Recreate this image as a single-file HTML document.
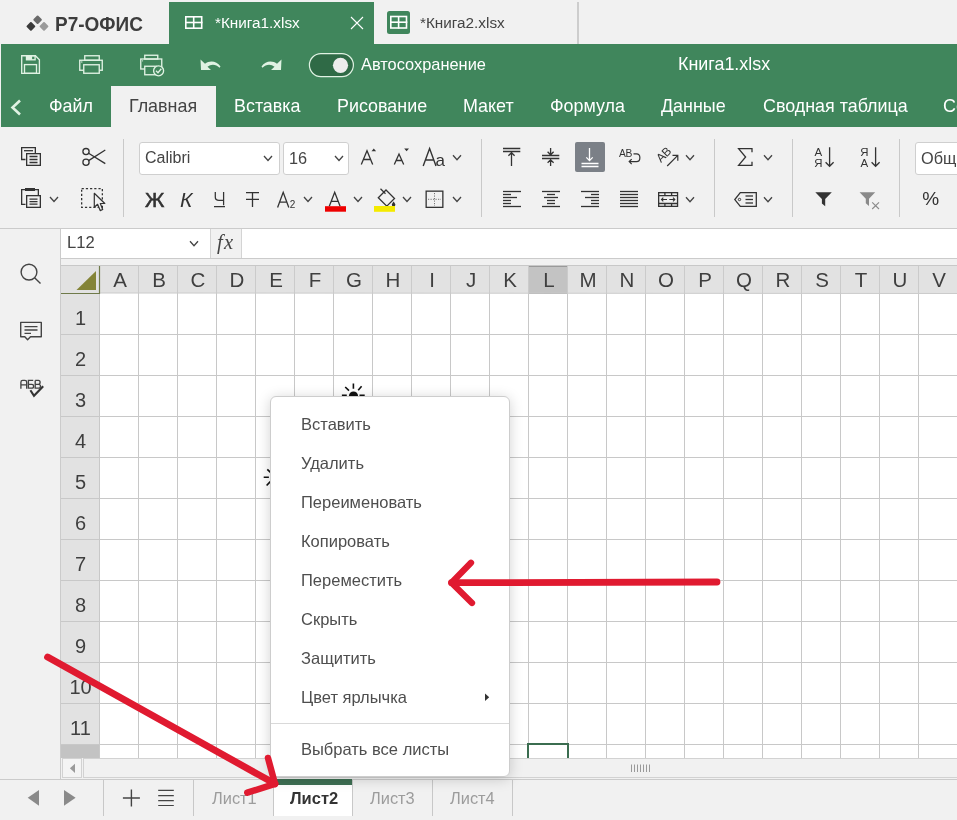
<!DOCTYPE html>
<html><head><meta charset="utf-8">
<style>
*{box-sizing:border-box}
html,body{margin:0;padding:0}
body{width:957px;height:820px;overflow:hidden;position:relative;background:#f1f1f1;font-family:"Liberation Sans",sans-serif;color:#444}
.a{position:absolute}
.t{position:absolute;white-space:nowrap;line-height:1;will-change:transform}
svg{position:absolute;overflow:visible;left:0;top:0;will-change:transform}
</style></head><body>
<div class="a" style="left:0;top:0;width:957px;height:44px;background:#f1f1f1"></div>
<svg width="957" height="44">
<rect x="27.5" y="23" width="6.8" height="6.8" rx="1" fill="#3a3a3a" transform="rotate(45 30.9 26.4)"/>
<rect x="34.2" y="16.5" width="6.6" height="6.6" rx="1" fill="#6a6a6a" transform="rotate(45 37.6 19.9)"/>
<rect x="40.6" y="23" width="6.8" height="6.8" rx="1" fill="#9a9a9a" transform="rotate(45 44 26.4)"/>
</svg>
<div class="t" style="left:55.00px;top:14.72px;font-size:19px;color:#3d3d3d;font-weight:bold;transform:scaleY(1.08);transform-origin:0 100%;">Р7-ОФИС</div>
<div class="a" style="left:169px;top:2px;width:205px;height:42px;background:#40865c"></div>
<svg width="957" height="44">
<g stroke="#fff" stroke-width="1.6" fill="none">
<rect x="185.8" y="16.8" width="15.9" height="11.4"/>
<line x1="193.7" y1="16" x2="193.7" y2="29"/><line x1="185" y1="22.5" x2="202.5" y2="22.5"/>
<path d="M351 17L363 29M363 17L351 29" stroke-width="1.1"/>
</g>
<rect x="387" y="11" width="23" height="23" rx="2.5" fill="#40865c"/>
<g stroke="#fff" stroke-width="1.6" fill="none">
<rect x="390.8" y="16.5" width="15.7" height="11.5"/>
<line x1="398.6" y1="16" x2="398.6" y2="28.5"/><line x1="390" y1="22.2" x2="407.3" y2="22.2"/>
</g>
</svg>
<div class="t" style="left:215.00px;top:15.35px;font-size:15.3px;color:#fff;font-weight:normal;">*Книга1.xlsx</div>
<div class="t" style="left:420.00px;top:15.35px;font-size:15.3px;color:#444;font-weight:normal;">*Книга2.xlsx</div>
<div class="a" style="left:577px;top:2px;width:2px;height:42px;background:#cdcdcd"></div>
<div class="a" style="left:1px;top:44px;width:956px;height:83px;background:#40865c"></div>
<svg width="957" height="130">
<g fill="none" stroke="#e0f2e3" stroke-width="1.35">
<path d="M21.7 55.7H35.4L39.4 59.7V73.3H21.7Z"/>
<rect x="24.5" y="64.6" width="12" height="8.7"/>
<rect x="26.5" y="55.7" width="8.6" height="4.1"/>
<!-- printer -->
<rect x="84.75" y="55.75" width="14.5" height="4.5"/>
<rect x="79.75" y="60.25" width="22.5" height="10"/>
<rect x="83.75" y="64.75" width="15.5" height="8.5" fill="#40865c"/>
<!-- quick print -->
<rect x="144.75" y="55.25" width="13" height="3.8"/>
<rect x="140.75" y="59" width="21" height="10"/>
<rect x="144.75" y="66.25" width="12" height="8.5" fill="#40865c"/>
<circle cx="158.6" cy="70.8" r="5" fill="#40865c"/>
<path d="M156 70.8L158 72.8L161.3 68.8"/>
</g>
<rect x="26.5" y="55.5" width="5.6" height="4.3" fill="#e0f2e3"/>
<circle cx="81.8" cy="62" r="0.7" fill="#e0f2e3"/>
<circle cx="142.6" cy="60.8" r="0.6" fill="#e0f2e3"/>
<!-- undo -->
<path d="M200.5 59.5L201 70H211L207.5 66.8C211 63.8 216 64 219.5 67.8L220.5 66.5C216.5 60.5 209.5 60 205 63.8Z" fill="#e0f2e3"/>
<!-- redo -->
<path d="M281.5 59.5L281 70H271L274.5 66.8C271 63.8 266 64 262.5 67.8L261.5 66.5C265.5 60.5 272.5 60 277 63.8Z" fill="#e0f2e3"/>
<!-- toggle -->
<rect x="309.4" y="53.6" width="44" height="23" rx="11.5" fill="#2f6a46" stroke="#e0f2e3" stroke-width="1.2"/>
<circle cx="340.5" cy="65.3" r="7.6" fill="#ececec"/>
<!-- back chevron -->
<path d="M20 100.5L12.5 107.5L20 114.5" fill="none" stroke="#e0f2e3" stroke-width="2.6"/>
</svg>
<div class="t" style="left:361.00px;top:55.92px;font-size:16.4px;color:#fff;font-weight:normal;">Автосохранение</div>
<div class="t" style="left:677.50px;top:56.15px;font-size:17.9px;color:#fff;font-weight:normal;">Книга1.xlsx</div>
<div class="a" style="left:111px;top:86px;width:105px;height:41px;background:#f1f1f1"></div>
<div class="t" style="left:49.00px;top:97.85px;font-size:17.9px;color:#fff;font-weight:normal;">Файл</div>
<div class="t" style="left:233.50px;top:97.85px;font-size:17.9px;color:#fff;font-weight:normal;">Вставка</div>
<div class="t" style="left:336.50px;top:97.85px;font-size:17.9px;color:#fff;font-weight:normal;">Рисование</div>
<div class="t" style="left:463.00px;top:97.85px;font-size:17.9px;color:#fff;font-weight:normal;">Макет</div>
<div class="t" style="left:550.00px;top:97.85px;font-size:17.9px;color:#fff;font-weight:normal;">Формула</div>
<div class="t" style="left:660.50px;top:97.85px;font-size:17.9px;color:#fff;font-weight:normal;">Данные</div>
<div class="t" style="left:762.50px;top:97.85px;font-size:17.9px;color:#fff;font-weight:normal;">Сводная таблица</div>
<div class="t" style="left:943.00px;top:97.85px;font-size:17.9px;color:#fff;font-weight:normal;">Совместная работа</div>
<div class="t" style="left:129.30px;top:97.85px;font-size:17.9px;color:#444;font-weight:normal;">Главная</div>
<div class="a" style="left:139px;top:142px;width:141px;height:33px;background:#fff;border:1px solid #cfcfcf;border-radius:3px"></div>
<div class="a" style="left:283px;top:142px;width:66px;height:33px;background:#fff;border:1px solid #cfcfcf;border-radius:3px"></div>
<div class="a" style="left:915px;top:142px;width:60px;height:33px;background:#fff;border:1px solid #cfcfcf;border-radius:3px"></div>
<div class="t" style="left:144.50px;top:150.16px;font-size:16px;color:#444;font-weight:normal;">Calibri</div>
<div class="t" style="left:289.00px;top:150.00px;font-size:16.3px;color:#444;font-weight:normal;">16</div>
<div class="t" style="left:921.00px;top:150.00px;font-size:16.3px;color:#444;font-weight:normal;">Общий</div>
<svg width="957" height="230"><line x1="123.5" y1="139" x2="123.5" y2="217" stroke="#c9c9c9" stroke-width="1"/>
<line x1="481.5" y1="139" x2="481.5" y2="217" stroke="#c9c9c9" stroke-width="1"/>
<line x1="714.5" y1="139" x2="714.5" y2="217" stroke="#c9c9c9" stroke-width="1"/>
<line x1="792.5" y1="139" x2="792.5" y2="217" stroke="#c9c9c9" stroke-width="1"/>
<line x1="899.5" y1="139" x2="899.5" y2="217" stroke="#c9c9c9" stroke-width="1"/>
<g fill="none" stroke="#333" stroke-width="1.3">
<path d="M25.5 159.5H21.65V147.65H35.35V153"/>
<line x1="24" y1="150.7" x2="33" y2="150.7"/>
<rect x="26.65" y="153.65" width="13.7" height="11.7" fill="#f1f1f1"/>
<path d="M29.5 156.5H37.5M29.5 159.5H37.5M29.5 162.5H37.5"/>
<circle cx="86" cy="151.6" r="3.1"/><circle cx="86" cy="162.3" r="3.1"/>
<path d="M88.6 153.3L105.3 163.6M88.6 160.6L105.3 150"/>
<path d="M25.5 204.3H21.65V189.65H38.35V195"/>
<rect x="26.65" y="195.65" width="13.7" height="11.7" fill="#f1f1f1"/>
<path d="M29.5 199.2H37.5M29.5 201.7H37.5M29.5 204.2H37.5"/>
</g>
<rect x="25" y="188" width="10" height="3" fill="#333"/>
<path d="M50 197L54 201.5L58 197" fill="none" stroke="#444" stroke-width="1.3"/>
<rect x="81.65" y="188.65" width="20.7" height="18.7" fill="none" stroke="#333" stroke-width="1.3" stroke-dasharray="2.2 2"/>
<path d="M94.3 193.3V207.3L97.6 204.3L100.2 210.6L102.7 209.5L100.3 203.5H104.8Z" fill="#f1f1f1" stroke="#333" stroke-width="1.2" stroke-linejoin="round"/>
<path d="M264 156L268 160.5L272 156" fill="none" stroke="#444" stroke-width="1.3"/>
<path d="M335 156L339 160.5L343 156" fill="none" stroke="#444" stroke-width="1.3"/>
<path d="M246 192.6H259M246 199.3H259M252.5 192.6V207" fill="none" stroke="#333" stroke-width="1.3"/>
<path d="M277.6 207.5L283.2 192.3L288.8 207.5M279.6 202.2H286.8" fill="none" stroke="#333" stroke-width="1.3"/>
<path d="M304 197L308 201.5L312 197" fill="none" stroke="#444" stroke-width="1.3"/>
<path d="M329.3 206.3L334.7 192.2L340.1 206.3M331.3 201.3H338.1" fill="none" stroke="#333" stroke-width="1.3"/>
<rect x="325" y="206.2" width="21" height="5.5" fill="#ee0000"/>
<path d="M354 197L358 201.5L362 197" fill="none" stroke="#444" stroke-width="1.3"/>
<path d="M361.3 164.6L367 150.8L372.7 164.6M363.3 159.5H370.7" fill="none" stroke="#333" stroke-width="1.3"/>
<path d="M371.5 151.2L373.8 148.4L376.1 151.2Z" fill="#333"/>
<path d="M394.3 164.6L399 154L403.7 164.6M395.9 160.5H402.1" fill="none" stroke="#333" stroke-width="1.3"/>
<path d="M404.2 148.6L406.6 151.3L409 148.6Z" fill="#333"/>
<path d="M423.2 166L429.6 148.5L436 166M425.5 160H433.7" fill="none" stroke="#333" stroke-width="1.4"/>
<path d="M453 155.3L457 159.8L461 155.3" fill="none" stroke="#444" stroke-width="1.3"/>
<path d="M403 197L407 201.5L411 197" fill="none" stroke="#444" stroke-width="1.3"/>
<path d="M453 197L457 201.5L461 197" fill="none" stroke="#444" stroke-width="1.3"/>
<path d="M386 190L394.5 198.5L386.8 206.2L378.3 197.7Z" fill="none" stroke="#333" stroke-width="1.3"/>
<path d="M380.5 188.8L385.5 193.8" stroke="#333" stroke-width="1.3"/>
<path d="M393.6 201.5C394.7 203.2 395.4 204 395.4 204.8A1.8 1.8 0 0 1 391.8 204.8C391.8 204 392.5 203.2 393.6 201.5Z" fill="#333"/>
<rect x="374" y="206" width="21" height="5.8" fill="#f4ea00"/>
<rect x="426.15" y="191.15" width="16.7" height="16.2" fill="none" stroke="#333" stroke-width="1.3"/>
<path d="M434.5 193V206M428 199.3H441" stroke="#666" stroke-width="0.9" stroke-dasharray="1.2 1.3"/>
<g stroke="#333" stroke-width="1.3" fill="none">
<path d="M503 148.5H520.3M503 151.5H520.3M511.5 166V152.5M508.4 155.8L511.5 152.7L514.6 155.8"/>
<path d="M542 155.5H559.3M542 158.5H559.3M550.6 148V154.8M547.6 151.8L550.6 154.8L553.6 151.8M550.6 166V159.8M547.6 162.8L550.6 159.8L553.6 162.8"/>
</g>
<rect x="575" y="142" width="30" height="30" rx="2" fill="#7b8087"/>
<path d="M581.5 163.5H598.5M581.5 166.5H598.5M589.5 148V160.5M586.3 157.4L589.5 160.6L592.7 157.4" stroke="#fff" stroke-width="1.3" fill="none"/>
<line x1="503" y1="191.5" x2="521" y2="191.5" stroke="#333" stroke-width="1.3"/>
<line x1="542" y1="191.5" x2="560" y2="191.5" stroke="#333" stroke-width="1.3"/>
<line x1="581" y1="191.5" x2="599" y2="191.5" stroke="#333" stroke-width="1.3"/>
<line x1="620" y1="191.5" x2="638" y2="191.5" stroke="#333" stroke-width="1.3"/>
<line x1="503" y1="194.5" x2="511" y2="194.5" stroke="#333" stroke-width="1.3"/>
<line x1="547" y1="194.5" x2="555" y2="194.5" stroke="#333" stroke-width="1.3"/>
<line x1="591" y1="194.5" x2="599" y2="194.5" stroke="#333" stroke-width="1.3"/>
<line x1="620" y1="194.5" x2="638" y2="194.5" stroke="#333" stroke-width="1.3"/>
<line x1="503" y1="197.5" x2="517" y2="197.5" stroke="#333" stroke-width="1.3"/>
<line x1="544" y1="197.5" x2="558" y2="197.5" stroke="#333" stroke-width="1.3"/>
<line x1="585" y1="197.5" x2="599" y2="197.5" stroke="#333" stroke-width="1.3"/>
<line x1="620" y1="197.5" x2="638" y2="197.5" stroke="#333" stroke-width="1.3"/>
<line x1="503" y1="200.5" x2="511" y2="200.5" stroke="#333" stroke-width="1.3"/>
<line x1="547" y1="200.5" x2="555" y2="200.5" stroke="#333" stroke-width="1.3"/>
<line x1="591" y1="200.5" x2="599" y2="200.5" stroke="#333" stroke-width="1.3"/>
<line x1="620" y1="200.5" x2="638" y2="200.5" stroke="#333" stroke-width="1.3"/>
<line x1="503" y1="203.5" x2="511" y2="203.5" stroke="#333" stroke-width="1.3"/>
<line x1="547" y1="203.5" x2="555" y2="203.5" stroke="#333" stroke-width="1.3"/>
<line x1="591" y1="203.5" x2="599" y2="203.5" stroke="#333" stroke-width="1.3"/>
<line x1="620" y1="203.5" x2="638" y2="203.5" stroke="#333" stroke-width="1.3"/>
<line x1="503" y1="206.5" x2="521" y2="206.5" stroke="#333" stroke-width="1.3"/>
<line x1="542" y1="206.5" x2="560" y2="206.5" stroke="#333" stroke-width="1.3"/>
<line x1="581" y1="206.5" x2="599" y2="206.5" stroke="#333" stroke-width="1.3"/>
<line x1="620" y1="206.5" x2="638" y2="206.5" stroke="#333" stroke-width="1.3"/>
<text x="619" y="156.8" font-family="Liberation Sans" font-size="10.3" fill="#333" letter-spacing="-0.3">AB</text>
<path d="M633.5 153.8H636.5C641 153.8 641 161.6 636.5 161.6H629.2M631.7 159.1L629.2 161.6L631.7 164.1" fill="none" stroke="#333" stroke-width="1.2"/>
<text x="0" y="0" font-family="Liberation Sans" font-size="12" fill="#333" transform="translate(661 163) rotate(-45)" letter-spacing="-0.4">AB</text>
<path d="M667.2 166L677.8 155.4M672.5 155.4H677.8V160.7" fill="none" stroke="#333" stroke-width="1.2"/>
<path d="M686 155.2L690 159.7L694 155.2" fill="none" stroke="#444" stroke-width="1.3"/>
<path d="M686 197.2L690 201.7L694 197.2" fill="none" stroke="#444" stroke-width="1.3"/>
<g fill="none" stroke="#333" stroke-width="1.3">
<rect x="658.65" y="192.65" width="18.9" height="13.7"/>
<path d="M658.6 195.6H677.6M658.6 203.5H677.6M664.9 192.6V195.6M671.6 192.6V195.6M664.9 203.5V206.4M671.6 203.5V206.4"/>
<path d="M661.5 199.5H667M674.8 199.5H669.3M663.3 197.7L661.5 199.5L663.3 201.3M673 197.7L674.8 199.5L673 201.3" stroke-width="1.1"/>
</g>
<path d="M752 152.2V148.6H738.6L745.6 157L738.6 165.4H752V161.8" fill="none" stroke="#333" stroke-width="1.3"/>
<path d="M764 155.3L768 159.8L772 155.3" fill="none" stroke="#444" stroke-width="1.3"/>
<path d="M764 197.2L768 201.7L772 197.2" fill="none" stroke="#444" stroke-width="1.3"/>
<path d="M756.3 192.6H740.3L734.8 199.6L740.3 206.3H756.3Z" fill="none" stroke="#333" stroke-width="1.3"/>
<circle cx="739.5" cy="199.5" r="1.2" fill="none" stroke="#333" stroke-width="1"/>
<line x1="745.5" y1="196" x2="753" y2="196" stroke="#333" stroke-width="1.3"/>
<line x1="745.5" y1="199.5" x2="753" y2="199.5" stroke="#333" stroke-width="1.3"/>
<line x1="745.5" y1="203" x2="753" y2="203" stroke="#333" stroke-width="1.3"/>
<text x="814.6" y="156.3" font-family="Liberation Sans" font-size="11.5" fill="#333">A</text>
<text x="0" y="0" font-family="Liberation Sans" font-size="11.5" fill="#333" transform="translate(822.6 166.7) scale(-1 1)">R</text>
<path d="M829.6 147.3V166.3M825.6 162.3L829.6 166.3L833.6 162.3" fill="none" stroke="#333" stroke-width="1.3"/>
<text x="0" y="0" font-family="Liberation Sans" font-size="11.5" fill="#333" transform="translate(868.4 156.3) scale(-1 1)">R</text>
<text x="860.4" y="166.7" font-family="Liberation Sans" font-size="11.5" fill="#333">A</text>
<path d="M875.6 147.3V166.3M871.6 162.3L875.6 166.3L879.6 162.3" fill="none" stroke="#333" stroke-width="1.3"/>
<path d="M815.3 192.2H831.8L825.2 199V206.3L821.9 203.5V199Z" fill="#333"/>
<path d="M859.6 192.2H875.2L869 198.8V206L865.8 203.2V198.8Z" fill="#8a8a8a"/>
<path d="M872.2 202.3L879 209M879 202.3L872.2 209" stroke="#8a8a8a" stroke-width="1.1"/>
<text x="922.2" y="205" font-family="Liberation Sans" font-size="19" fill="#333">%</text></svg>
<div class="t" style="left:144.60px;top:189.42px;font-size:21px;color:#333;font-weight:normal;-webkit-text-stroke:0.55px #333;">Ж</div>
<div class="t" style="left:180.20px;top:189.42px;font-size:21px;color:#333;font-weight:normal;font-style:italic;">К</div>
<svg width="957" height="230"><path d="M215.3 192V197.3C215.3 199.6 216.5 200.4 219 200.4H223.6M223.6 192V205.3M214 206.5H225" fill="none" stroke="#333" stroke-width="1.25"/></svg>
<svg width="957" height="230"><text x="289.8" y="208" font-family="Liberation Sans" font-size="10" fill="#333">2</text><text x="435.6" y="166" font-family="Liberation Sans" font-size="17" fill="#333">a</text></svg>
<div class="a" style="left:0;top:228px;width:957px;height:1px;background:#cbcbcb"></div>
<div class="a" style="left:60px;top:228px;width:1px;height:551px;background:#cbcbcb"></div>
<div class="a" style="left:61px;top:229px;width:896px;height:29px;background:#fff"></div>
<div class="a" style="left:61px;top:258px;width:896px;height:1px;background:#cbcbcb"></div>
<div class="a" style="left:210px;top:229px;width:32px;height:29px;background:#f1f1f1;border-left:1px solid #d4d4d4;border-right:1px solid #d4d4d4"></div>
<div class="t" style="left:67.00px;top:234.75px;font-size:16.6px;color:#444;font-weight:normal;">L12</div>
<svg width="957" height="300"><path d="M190 241.2L194 245.7L198 241.2" fill="none" stroke="#444" stroke-width="1.3"/></svg>
<div class="t" style="left:217.00px;top:232.25px;font-size:20.5px;color:#444;font-weight:normal;font-family:'Liberation Serif',serif;font-style:italic;letter-spacing:1.2px;">fx</div>
<svg width="60" height="420">
<g fill="none" stroke="#444" stroke-width="1.4">
<circle cx="29" cy="272.1" r="7.9"/>
<path d="M34.6 277.8L40.5 283.5"/>
<path d="M20.7 322.4H41.3V336.8H30.5L27.6 339.8L24.8 336.8H20.7Z" stroke-linejoin="round"/>
<path d="M24.5 326.6H37.5M24.5 330H37.5M24.5 333.4H31"/>
<path d="M30.4 390.2L34 395.8L43.2 386.3" stroke-width="2.1" stroke="#333"/>
</g>
<g fill="none" stroke="#444" stroke-width="1.35">
<path d="M20.9 388.8V382.2Q20.9 380.4 22.7 380.4H24.9Q26.7 380.4 26.7 382.2V388.8M20.9 384.8H26.7"/>
<path d="M33.2 380.4H28.4V388.1H31.9Q33.6 388.1 33.6 386.2Q33.6 384.4 31.9 384.4H28.4"/>
<path d="M35.2 380.4V388.1H38.7Q40.5 388.1 40.5 386.2Q40.5 384.3 38.7 384.3H35.2M35.2 380.4H38.4Q40.1 380.4 40.1 382.3Q40.1 384.3 38.4 384.3"/>
</g>
</svg>
<div class="a" style="left:61px;top:266px;width:896px;height:492px;background:#fff"></div>
<div class="a" style="left:61px;top:265px;width:896px;height:1px;background:#c8c8c8"></div>
<div class="a" style="left:61px;top:266px;width:896px;height:27px;background:#e2e2e2"></div>
<div class="a" style="left:61px;top:266px;width:39px;height:492px;background:#e2e2e2"></div>
<div class="a" style="left:528px;top:266px;width:40px;height:28px;background:#c3c3c3;border:1px solid #9a9a9a"></div>
<div class="a" style="left:61px;top:744px;width:39px;height:14px;background:#c3c3c3;border-top:1px solid #9c9c9c"></div>
<svg width="957" height="820"><g stroke="#c8c8c8" stroke-width="1">
<line x1="99.5" y1="293" x2="99.5" y2="758"/>
<line x1="138.5" y1="293" x2="138.5" y2="758"/>
<line x1="177.5" y1="293" x2="177.5" y2="758"/>
<line x1="216.5" y1="293" x2="216.5" y2="758"/>
<line x1="255.5" y1="293" x2="255.5" y2="758"/>
<line x1="294.5" y1="293" x2="294.5" y2="758"/>
<line x1="333.5" y1="293" x2="333.5" y2="758"/>
<line x1="372.5" y1="293" x2="372.5" y2="758"/>
<line x1="411.5" y1="293" x2="411.5" y2="758"/>
<line x1="450.5" y1="293" x2="450.5" y2="758"/>
<line x1="489.5" y1="293" x2="489.5" y2="758"/>
<line x1="528.5" y1="293" x2="528.5" y2="758"/>
<line x1="567.5" y1="293" x2="567.5" y2="758"/>
<line x1="606.5" y1="293" x2="606.5" y2="758"/>
<line x1="645.5" y1="293" x2="645.5" y2="758"/>
<line x1="684.5" y1="293" x2="684.5" y2="758"/>
<line x1="723.5" y1="293" x2="723.5" y2="758"/>
<line x1="762.5" y1="293" x2="762.5" y2="758"/>
<line x1="801.5" y1="293" x2="801.5" y2="758"/>
<line x1="840.5" y1="293" x2="840.5" y2="758"/>
<line x1="879.5" y1="293" x2="879.5" y2="758"/>
<line x1="918.5" y1="293" x2="918.5" y2="758"/>
<line x1="957.5" y1="293" x2="957.5" y2="758"/>
<line x1="61" y1="334.5" x2="957" y2="334.5"/>
<line x1="61" y1="375.5" x2="957" y2="375.5"/>
<line x1="61" y1="416.5" x2="957" y2="416.5"/>
<line x1="61" y1="457.5" x2="957" y2="457.5"/>
<line x1="61" y1="498.5" x2="957" y2="498.5"/>
<line x1="61" y1="539.5" x2="957" y2="539.5"/>
<line x1="61" y1="580.5" x2="957" y2="580.5"/>
<line x1="61" y1="621.5" x2="957" y2="621.5"/>
<line x1="61" y1="662.5" x2="957" y2="662.5"/>
<line x1="61" y1="703.5" x2="957" y2="703.5"/>
<line x1="61" y1="744.5" x2="957" y2="744.5"/>
</g>
<g stroke="#cbcbcb" stroke-width="1">
<line x1="99.5" y1="266" x2="99.5" y2="293"/>
<line x1="138.5" y1="266" x2="138.5" y2="293"/>
<line x1="177.5" y1="266" x2="177.5" y2="293"/>
<line x1="216.5" y1="266" x2="216.5" y2="293"/>
<line x1="255.5" y1="266" x2="255.5" y2="293"/>
<line x1="294.5" y1="266" x2="294.5" y2="293"/>
<line x1="333.5" y1="266" x2="333.5" y2="293"/>
<line x1="372.5" y1="266" x2="372.5" y2="293"/>
<line x1="411.5" y1="266" x2="411.5" y2="293"/>
<line x1="450.5" y1="266" x2="450.5" y2="293"/>
<line x1="489.5" y1="266" x2="489.5" y2="293"/>
<line x1="528.5" y1="266" x2="528.5" y2="293"/>
<line x1="567.5" y1="266" x2="567.5" y2="293"/>
<line x1="606.5" y1="266" x2="606.5" y2="293"/>
<line x1="645.5" y1="266" x2="645.5" y2="293"/>
<line x1="684.5" y1="266" x2="684.5" y2="293"/>
<line x1="723.5" y1="266" x2="723.5" y2="293"/>
<line x1="762.5" y1="266" x2="762.5" y2="293"/>
<line x1="801.5" y1="266" x2="801.5" y2="293"/>
<line x1="840.5" y1="266" x2="840.5" y2="293"/>
<line x1="879.5" y1="266" x2="879.5" y2="293"/>
<line x1="918.5" y1="266" x2="918.5" y2="293"/>
<line x1="957.5" y1="266" x2="957.5" y2="293"/>
<line x1="99.5" y1="293" x2="957" y2="293.5"/>
</g>
<path d="M76.5 290H96V271Z" fill="#848437"/>
<path d="M99.5 266V293.5H61" fill="none" stroke="#6f7a4a" stroke-width="1.2"/>
<path d="M528 758V744H568V758" fill="none" stroke="#3b6d50" stroke-width="2"/></svg>
<div class="t" style="left:99.8px;top:269.94675px;width:40px;text-align:center;font-size:20.5px;color:#3f3f3f">A</div>
<div class="t" style="left:138.8px;top:269.94675px;width:40px;text-align:center;font-size:20.5px;color:#3f3f3f">B</div>
<div class="t" style="left:177.8px;top:269.94675px;width:40px;text-align:center;font-size:20.5px;color:#3f3f3f">C</div>
<div class="t" style="left:216.8px;top:269.94675px;width:40px;text-align:center;font-size:20.5px;color:#3f3f3f">D</div>
<div class="t" style="left:255.8px;top:269.94675px;width:40px;text-align:center;font-size:20.5px;color:#3f3f3f">E</div>
<div class="t" style="left:294.8px;top:269.94675px;width:40px;text-align:center;font-size:20.5px;color:#3f3f3f">F</div>
<div class="t" style="left:333.8px;top:269.94675px;width:40px;text-align:center;font-size:20.5px;color:#3f3f3f">G</div>
<div class="t" style="left:372.8px;top:269.94675px;width:40px;text-align:center;font-size:20.5px;color:#3f3f3f">H</div>
<div class="t" style="left:411.8px;top:269.94675px;width:40px;text-align:center;font-size:20.5px;color:#3f3f3f">I</div>
<div class="t" style="left:450.8px;top:269.94675px;width:40px;text-align:center;font-size:20.5px;color:#3f3f3f">J</div>
<div class="t" style="left:489.8px;top:269.94675px;width:40px;text-align:center;font-size:20.5px;color:#3f3f3f">K</div>
<div class="t" style="left:528.8px;top:269.94675px;width:40px;text-align:center;font-size:20.5px;color:#3f3f3f">L</div>
<div class="t" style="left:567.8px;top:269.94675px;width:40px;text-align:center;font-size:20.5px;color:#3f3f3f">M</div>
<div class="t" style="left:606.8px;top:269.94675px;width:40px;text-align:center;font-size:20.5px;color:#3f3f3f">N</div>
<div class="t" style="left:645.8px;top:269.94675px;width:40px;text-align:center;font-size:20.5px;color:#3f3f3f">O</div>
<div class="t" style="left:684.8px;top:269.94675px;width:40px;text-align:center;font-size:20.5px;color:#3f3f3f">P</div>
<div class="t" style="left:723.8px;top:269.94675px;width:40px;text-align:center;font-size:20.5px;color:#3f3f3f">Q</div>
<div class="t" style="left:762.8px;top:269.94675px;width:40px;text-align:center;font-size:20.5px;color:#3f3f3f">R</div>
<div class="t" style="left:801.8px;top:269.94675px;width:40px;text-align:center;font-size:20.5px;color:#3f3f3f">S</div>
<div class="t" style="left:840.8px;top:269.94675px;width:40px;text-align:center;font-size:20.5px;color:#3f3f3f">T</div>
<div class="t" style="left:879.8px;top:269.94675px;width:40px;text-align:center;font-size:20.5px;color:#3f3f3f">U</div>
<div class="t" style="left:918.8px;top:269.94675px;width:40px;text-align:center;font-size:20.5px;color:#3f3f3f">V</div>
<div class="t" style="left:61px;top:308.17px;width:39px;text-align:center;font-size:20px;color:#3f3f3f">1</div>
<div class="t" style="left:61px;top:349.17px;width:39px;text-align:center;font-size:20px;color:#3f3f3f">2</div>
<div class="t" style="left:61px;top:390.17px;width:39px;text-align:center;font-size:20px;color:#3f3f3f">3</div>
<div class="t" style="left:61px;top:431.17px;width:39px;text-align:center;font-size:20px;color:#3f3f3f">4</div>
<div class="t" style="left:61px;top:472.17px;width:39px;text-align:center;font-size:20px;color:#3f3f3f">5</div>
<div class="t" style="left:61px;top:513.17px;width:39px;text-align:center;font-size:20px;color:#3f3f3f">6</div>
<div class="t" style="left:61px;top:554.17px;width:39px;text-align:center;font-size:20px;color:#3f3f3f">7</div>
<div class="t" style="left:61px;top:595.17px;width:39px;text-align:center;font-size:20px;color:#3f3f3f">8</div>
<div class="t" style="left:61px;top:636.17px;width:39px;text-align:center;font-size:20px;color:#3f3f3f">9</div>
<div class="t" style="left:61px;top:677.17px;width:39px;text-align:center;font-size:20px;color:#3f3f3f">10</div>
<div class="t" style="left:61px;top:718.17px;width:39px;text-align:center;font-size:20px;color:#3f3f3f">11</div>
<svg width="957" height="820">
<g stroke="#111" stroke-width="1.6" stroke-linecap="butt">
<path d="M353.4 383.6V388.8M345.2 387L349 390.6M361.6 386.3L358.2 390.3M341.9 395.3H346.8M359.5 395.3H364.7"/>
<path d="M263.7 477.2H268.9M267.3 469.3L270.5 472.3M266.6 485.5L270.3 481.6"/>
</g>
<path d="M348.9 396A4.6 4.6 0 0 1 358.1 396Z" fill="#111"/>
</svg>
<div class="a" style="left:61px;top:758px;width:896px;height:20px;background:#f1f1f1"></div>
<div class="a" style="left:0;top:779px;width:957px;height:1px;background:#cbcbcb"></div>
<div class="a" style="left:62px;top:758px;width:20px;height:20px;background:#f4f4f4;border:1px solid #d2d2d2"></div>
<div class="a" style="left:83px;top:758px;width:874px;height:20px;background:#f1f1f1;border:1px solid #d2d2d2;border-right:none"></div>
<svg width="957" height="820"><g stroke="#9a9a9a" stroke-width="1"><line x1="631.5" y1="764.5" x2="631.5" y2="772"/><line x1="634.5" y1="764.5" x2="634.5" y2="772"/><line x1="637.5" y1="764.5" x2="637.5" y2="772"/><line x1="640.5" y1="764.5" x2="640.5" y2="772"/><line x1="643.5" y1="764.5" x2="643.5" y2="772"/><line x1="646.5" y1="764.5" x2="646.5" y2="772"/><line x1="649.5" y1="764.5" x2="649.5" y2="772"/></g><path d="M69.9 768.3L75 763.8V772.9Z" fill="#9a9a9a"/></svg>
<svg width="957" height="820">
<path d="M39 790V805.7L27.7 797.8Z" fill="#8a8a8a"/>
<path d="M64 790V805.7L75.6 797.8Z" fill="#8a8a8a"/>
<g stroke="#c8c8c8" stroke-width="1">
<line x1="103.5" y1="780" x2="103.5" y2="816"/>
<line x1="193.5" y1="780" x2="193.5" y2="816"/>
<line x1="432.5" y1="780" x2="432.5" y2="816"/>
<line x1="512.5" y1="780" x2="512.5" y2="816"/>
</g>
<g stroke="#444" stroke-width="1.4">
<path d="M131.4 789.5V806.5M122.9 798H139.9"/>
<path d="M158.2 790.3H173.8M158.2 795.6H173.8M158.2 800.6H173.8M158.2 805.5H173.8" stroke-width="1.2"/>
</g>
</svg>
<div class="a" style="left:273px;top:780px;width:80px;height:36px;background:#fff;border-left:1px solid #c8c8c8;border-right:1px solid #c8c8c8"></div>
<div class="a" style="left:274px;top:779px;width:78px;height:6px;background:#3e6f53"></div>
<div class="t" style="left:211.50px;top:790.12px;font-size:16.4px;color:#9c9c9c;font-weight:normal;">Лист1</div>
<div class="t" style="left:289.60px;top:790.03px;font-size:16.5px;color:#333;font-weight:bold;">Лист2</div>
<div class="t" style="left:370.30px;top:790.12px;font-size:16.4px;color:#9c9c9c;font-weight:normal;">Лист3</div>
<div class="t" style="left:449.70px;top:790.12px;font-size:16.4px;color:#9c9c9c;font-weight:normal;">Лист4</div>
<div class="a" style="left:270px;top:396px;width:240px;height:381px;background:#fff;border:1px solid #cdcdcd;border-radius:6px;box-shadow:0 2px 14px rgba(0,0,0,0.18)"></div>
<div class="t" style="left:301.20px;top:416.03px;font-size:16.5px;color:#4e4e4e;font-weight:normal;">Вставить</div>
<div class="t" style="left:301.20px;top:455.03px;font-size:16.5px;color:#4e4e4e;font-weight:normal;">Удалить</div>
<div class="t" style="left:301.20px;top:494.03px;font-size:16.5px;color:#4e4e4e;font-weight:normal;">Переименовать</div>
<div class="t" style="left:301.20px;top:533.03px;font-size:16.5px;color:#4e4e4e;font-weight:normal;">Копировать</div>
<div class="t" style="left:301.20px;top:572.03px;font-size:16.5px;color:#4e4e4e;font-weight:normal;">Переместить</div>
<div class="t" style="left:301.20px;top:611.03px;font-size:16.5px;color:#4e4e4e;font-weight:normal;">Скрыть</div>
<div class="t" style="left:301.20px;top:650.03px;font-size:16.5px;color:#4e4e4e;font-weight:normal;">Защитить</div>
<div class="t" style="left:301.20px;top:689.03px;font-size:16.5px;color:#4e4e4e;font-weight:normal;">Цвет ярлычка</div>
<div class="a" style="left:271px;top:723px;width:238px;height:1px;background:#d9d9d9"></div>
<div class="t" style="left:301.20px;top:741.33px;font-size:16.5px;color:#4e4e4e;font-weight:normal;">Выбрать все листы</div>
<svg width="957" height="820"><path d="M485 693.4L489.2 697.2L485 701Z" fill="#333"/></svg>
<svg width="957" height="820">
<g fill="none" stroke="#e01a30" stroke-linecap="round" stroke-linejoin="round">
<path d="M717 582L451.5 582.7" stroke-width="6.8"/>
<path d="M471 562.8L451.5 582.8L472 603" stroke-width="6.3"/>
<path d="M47.6 657.1L275 783.8" stroke-width="6.9"/>
<path d="M268 758L275 783.8L247.3 792.7" stroke-width="6.5"/>
</g>
</svg>
</body></html>
